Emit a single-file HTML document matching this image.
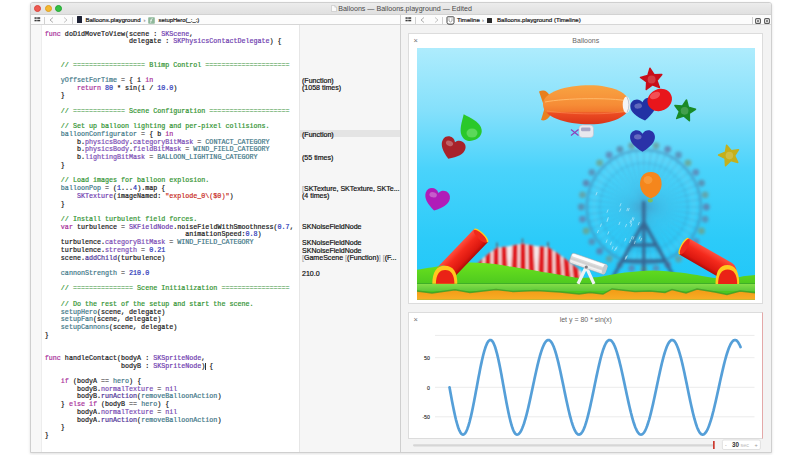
<!DOCTYPE html>
<html><head><meta charset="utf-8">
<style>
*{margin:0;padding:0;box-sizing:border-box}
html,body{width:800px;height:455px;overflow:hidden;background:#fff;font-family:"Liberation Sans",sans-serif}
.abs{position:absolute}
#win{position:absolute;left:30px;top:2px;width:742px;height:451px;background:#fff;border:1px solid #cfcfcf;border-radius:3px 3px 0 0;overflow:hidden;box-shadow:0 1px 3px rgba(0,0,0,.12)}
#title{position:absolute;left:0;top:0;width:740px;height:11px;background:linear-gradient(#ececec,#e0e0e0);}
.tl{position:absolute;top:1.9px;width:7px;height:7px;border-radius:50%}
#jb{position:absolute;left:0;top:11px;width:740px;height:11px;background:#fcfcfc;border-bottom:1px solid #d6d6d6;border-top:0.5px solid #d2d2d2}
.jt{position:absolute;top:-0.1px;font-size:6.1px;line-height:10px;color:#1a1a1a;-webkit-text-stroke:0.2px currentColor;white-space:nowrap}
#gutter{position:absolute;left:0;top:22px;width:11px;height:429px;background:#f8f8f8;border-right:1px solid #ededed}
#code{position:absolute;left:13.8px;top:27.7px;-webkit-text-stroke:0.2px currentColor;font-family:"Liberation Mono",monospace;font-size:6.7px;line-height:7.72px;white-space:pre;color:#1a1a1a}
#side{position:absolute;left:268.2px;top:22px;width:101.2px;height:429px;background:#f6f6f6;border-left:1px solid #e6e6e6}
#res{position:absolute;left:271px;top:27.4px;font-size:7.05px;-webkit-text-stroke:0.2px currentColor;line-height:7.72px;white-space:pre;color:#111}
#divv{position:absolute;left:369.4px;top:12px;width:1px;height:438px;background:#cfcfcf}
#right{position:absolute;left:370.4px;top:22px;width:369.6px;height:429px;background:#f3f3f3}
.card{position:absolute;background:#fff;border:1px solid #dedede}
.k{color:#a8309a}.t{color:#7040b0}.n{color:#2a36b8}.c{color:#329432}.p{color:#427888}.s{color:#c82a1e}.pr{color:#7a4cb4}.pd{color:#4e3296}
</style></head><body>
<div id="win">
  <div id="title">
    <div class="tl" style="left:3.1px;background:#ee5a52;border:0.5px solid #d8453d"></div>
    <div class="tl" style="left:13.5px;background:#f5b830;border:0.5px solid #dc9e22"></div>
    <div class="tl" style="left:23.8px;background:#35c045;border:0.5px solid #22a432"></div>
    <svg class="abs" style="left:299.5px;top:2.2px" width="6" height="7" viewBox="0 0 6 7"><path d="M0.5 0.5 H3.8 L5.5 2.2 V6.5 H0.5 Z" fill="#fafafa" stroke="#b8b8b8" stroke-width="0.5"/><path d="M3.8 0.5 V2.2 H5.5" fill="none" stroke="#b8b8b8" stroke-width="0.5"/></svg>
    <div class="abs" style="left:307.2px;top:0;font-size:7.1px;line-height:13px;color:#4a4a4a;white-space:nowrap">Balloons — Balloons.playground — Edited</div>
  </div>
  <div id="jb">
 <svg class="abs" style="left:2.8px;top:1.8px" width="7" height="5" viewBox="0 0 7 5"><rect x="0.5" y="0.3" width="2.2" height="1.5" fill="#3a3a3a"/><rect x="3.2" y="0.3" width="3" height="1.5" fill="#3a3a3a"/><rect x="0.5" y="2.8" width="2.2" height="1.5" fill="#3a3a3a"/><rect x="3.2" y="2.8" width="3" height="1.5" fill="#3a3a3a"/></svg>
 <div class="abs" style="left:12.6px;top:2px;width:0.8px;height:7px;background:#d0d0d0"></div>
 <svg class="abs" style="left:17.8px;top:2.2px" width="5" height="6" viewBox="0 0 5 6"><path d="M4 0.5 L1 3 L4 5.5" stroke="#9a9a9a" stroke-width="0.8" fill="none"/></svg>
 <svg class="abs" style="left:32px;top:2.2px" width="5" height="6" viewBox="0 0 5 6"><path d="M1 0.5 L4 3 L1 5.5" stroke="#b8b8b8" stroke-width="0.8" fill="none"/></svg>
 <div class="abs" style="left:40.8px;top:2px;width:0.8px;height:7px;background:#d0d0d0"></div>
 <div class="abs" style="left:45.6px;top:1.4px;width:5.6px;height:6.8px;background:#1e2235;border-radius:0.5px"></div>
 <div class="jt" style="left:54.4px">Balloons.playground</div>
 <div class="jt" style="left:112.5px;color:#999">›</div>
 <svg class="abs" style="left:117.4px;top:1.6px" width="7" height="7" viewBox="0 0 7 7"><rect x="0.2" y="0.2" width="6.6" height="6.6" rx="0.8" fill="#8fb89a"/><path d="M4.6 1.6 Q3.4 1.4 3.2 2.8 L2.6 5.8 M2.2 3.3 H4" stroke="#fff" stroke-width="0.7" fill="none"/></svg>
 <div class="jt" style="left:127.6px;font-size:5.85px">setupHero(_:_:)</div>
 <svg class="abs" style="left:373.5px;top:1.8px" width="7" height="5" viewBox="0 0 7 5"><rect x="0.5" y="0.3" width="2.2" height="1.5" fill="#3a3a3a"/><rect x="3.2" y="0.3" width="3" height="1.5" fill="#3a3a3a"/><rect x="0.5" y="2.8" width="2.2" height="1.5" fill="#3a3a3a"/><rect x="3.2" y="2.8" width="3" height="1.5" fill="#3a3a3a"/></svg>
 <div class="abs" style="left:384.2px;top:2px;width:0.8px;height:7px;background:#d0d0d0"></div>
 <svg class="abs" style="left:388.6px;top:2.2px" width="5" height="6" viewBox="0 0 5 6"><path d="M4 0.5 L1 3 L4 5.5" stroke="#9a9a9a" stroke-width="0.8" fill="none"/></svg>
 <svg class="abs" style="left:402.8px;top:2.2px" width="5" height="6" viewBox="0 0 5 6"><path d="M1 0.5 L4 3 L1 5.5" stroke="#b8b8b8" stroke-width="0.8" fill="none"/></svg>
 <div class="abs" style="left:410.8px;top:2px;width:0.8px;height:7px;background:#d0d0d0"></div>
 <svg class="abs" style="left:414.8px;top:1px" width="9" height="9" viewBox="0 0 9 9"><path d="M1 1.5 Q1 0.8 1.8 0.8 H7.2 Q8 0.8 8 1.5 V6.5 Q8 8.2 6 8.2 H3 Q1 8.2 1 6.5 Z" fill="#fff" stroke="#444" stroke-width="1"/><path d="M3 2.2 V5 L4.5 6 L6 5 V2.2" fill="none" stroke="#777" stroke-width="0.6"/></svg>
 <div class="jt" style="left:426px">Timeline</div>
 <div class="jt" style="left:451px;color:#999">›</div>
 <div class="abs" style="left:455.9px;top:2.6px;width:5px;height:5.5px;background:#2a2a2a;border-radius:0.5px"></div>
 <div class="jt" style="left:466px">Balloons.playground (Timeline)</div>
 <div class="abs" style="left:720.6px;top:2px;width:0.8px;height:7px;background:#d0d0d0"></div>
 <svg class="abs" style="left:723.6px;top:2.6px" width="6" height="6" viewBox="0 0 6 6"><rect x="0.6" y="0.6" width="4.8" height="4.8" rx="1" fill="none" stroke="#5a5a5a" stroke-width="1.1"/><rect x="2.1" y="2.1" width="1.8" height="1.8" fill="#6a6a6a"/></svg>
 <svg class="abs" style="left:732.8px;top:2.6px" width="6" height="6" viewBox="0 0 6 6"><rect x="0.6" y="0.6" width="4.8" height="4.8" rx="1" fill="none" stroke="#5a5a5a" stroke-width="1.1"/><rect x="2.1" y="2.1" width="1.8" height="1.8" fill="#6a6a6a"/></svg>
</div>
  <div id="gutter"></div>
  <div id="side"></div>
  <div class="abs" style="left:269.2px;top:126.8px;width:100.2px;height:7.4px;background:#e4e4e4"></div>
  <div id="code"><span class="k">func</span> doDidMoveToView(scene : <span class="t">SKScene</span>,
                     delegate : <span class="t">SKPhysicsContactDelegate</span>) {


<span class="c">    // ================== Blimp Control =====================</span>

<span class="p">    yOffsetForTime</span> = { i <span class="k">in</span>
        <span class="k">return</span> <span class="n">80</span> * sin(i / <span class="n">10.0</span>)
    }

<span class="c">    // ============= Scene Configuration ====================</span>

<span class="c">    // Set up balloon lighting and per-pixel collisions.</span>
<span class="p">    balloonConfigurator</span> = { b <span class="k">in</span>
        b.<span class="pr">physicsBody</span>.<span class="pr">categoryBitMask</span> = <span class="p">CONTACT_CATEGORY</span>
        b.<span class="pr">physicsBody</span>.<span class="pr">fieldBitMask</span> = <span class="p">WIND_FIELD_CATEGORY</span>
        b.<span class="pr">lightingBitMask</span> = <span class="p">BALLOON_LIGHTING_CATEGORY</span>
    }

<span class="c">    // Load images for balloon explosion.</span>
<span class="p">    balloonPop</span> = (<span class="n">1</span>...<span class="n">4</span>).map {
        <span class="t">SKTexture</span>(imageNamed: <span class="s">"explode_0\($0)"</span>)
    }

<span class="c">    // Install turbulent field forces.</span>
    <span class="k">var</span> turbulence = <span class="t">SKFieldNode</span>.noiseFieldWithSmoothness(<span class="n">0.7</span>,
                                   animationSpeed:<span class="n">0.8</span>)
    turbulence.<span class="pr">categoryBitMask</span> = <span class="p">WIND_FIELD_CATEGORY</span>
    turbulence.<span class="pr">strength</span> = <span class="n">0.21</span>
    scene.<span class="pd">addChild</span>(turbulence)

<span class="p">    cannonStrength</span> = <span class="n">210.0</span>

<span class="c">    // =============== Scene Initialization =================</span>

<span class="c">    // Do the rest of the setup and start the scene.</span>
<span class="p">    setupHero</span>(scene, delegate)
<span class="p">    setupFan</span>(scene, delegate)
<span class="p">    setupCannons</span>(scene, delegate)
}


<span class="k">func</span> handleContact(bodyA : <span class="t">SKSpriteNode</span>,
                   bodyB : <span class="t">SKSpriteNode</span>) {

    <span class="k">if</span> (bodyA == <span class="p">hero</span>) {
        bodyB.<span class="pr">normalTexture</span> = <span class="pr">nil</span>
        bodyB.<span class="pd">runAction</span>(<span class="p">removeBalloonAction</span>)
    } <span class="k">else if</span> (bodyB == <span class="p">hero</span>) {
        bodyA.<span class="pr">normalTexture</span> = <span class="pr">nil</span>
        bodyA.<span class="pd">runAction</span>(<span class="p">removeBalloonAction</span>)
    }
}</div>
  <div id="res">





(Function)
(1058 times)





(Function)


(55 times)



<span style="color:#aaa">[</span>SKTexture, SKTexture, SKTe...
(4 times)



SKNoiseFieldNode

SKNoiseFieldNode
SKNoiseFieldNode
<span style="color:#aaa">[</span>GameScene <span style="color:#aaa">[</span>(Function)<span style="color:#aaa">]</span> <span style="color:#aaa">[</span>(F...

210.0</div>
  <div class="abs" style="left:173.8px;top:359.5px;width:0.7px;height:7.5px;background:#333"></div>
  <div id="divv"></div>
  <div id="right"></div>
<div id="rp" class="abs" style="left:-31px;top:-3px;width:800px;height:455px;pointer-events:none">
<div class="abs" style="left:408.1px;top:32.6px;width:354.9px;height:271.4px;background:#fff;border:1px solid #dcdcdc"></div>
<div class="abs" style="left:413.6px;top:35.5px;font-size:7.5px;line-height:10px;color:#707070">×</div>
<div class="abs" style="left:408.6px;top:36px;width:354.4px;text-align:center;font-size:7px;line-height:10px;color:#666">Balloons</div>
<div class="abs" style="left:408.1px;top:312px;width:354.9px;height:126.6px;background:#fff;border:1px solid #dcdcdc;border-right:1.5px solid #e4a8a8"></div>
<div class="abs" style="left:413.6px;top:314.8px;font-size:7.5px;line-height:10px;color:#707070">×</div>
<div class="abs" style="left:408.6px;top:315px;width:354.4px;text-align:center;font-size:7px;line-height:10px;color:#666">let y = 80 * sin(x)</div>
<svg class="abs" style="left:0;top:0" width="800" height="455" viewBox="0 0 800 455">
<defs>
<linearGradient id="sky" x1="0" y1="48" x2="0" y2="300" gradientUnits="userSpaceOnUse"><stop offset="0" stop-color="#aeecfd"/><stop offset="0.25" stop-color="#84e0fb"/><stop offset="0.48" stop-color="#4ad3fb"/><stop offset="0.76" stop-color="#2ccbf9"/><stop offset="1" stop-color="#1ec6f8"/></linearGradient>
<linearGradient id="hill" x1="0" y1="258" x2="0" y2="285" gradientUnits="userSpaceOnUse"><stop offset="0" stop-color="#72e81c"/><stop offset="1" stop-color="#4cc820"/></linearGradient>
<linearGradient id="band" x1="0" y1="283" x2="0" y2="291" gradientUnits="userSpaceOnUse"><stop offset="0" stop-color="#8ae04a"/><stop offset="1" stop-color="#5cc83a"/></linearGradient>
<linearGradient id="orange" x1="0" y1="289" x2="0" y2="300" gradientUnits="userSpaceOnUse"><stop offset="0" stop-color="#f29a14"/><stop offset="1" stop-color="#f8ae26"/></linearGradient>
<linearGradient id="barrelL" x1="0" y1="0" x2="1" y2="0"><stop offset="0" stop-color="#c81010"/><stop offset="0.45" stop-color="#f02a1e"/><stop offset="1" stop-color="#ff6a50"/></linearGradient>
<linearGradient id="barrelR" x1="0" y1="0" x2="0" y2="1"><stop offset="0" stop-color="#ff5a40"/><stop offset="0.5" stop-color="#ee2418"/><stop offset="1" stop-color="#c01010"/></linearGradient>
<linearGradient id="blimpg" x1="0" y1="85" x2="0" y2="125" gradientUnits="userSpaceOnUse"><stop offset="0" stop-color="#f8a442"/><stop offset="0.5" stop-color="#f68c36"/><stop offset="0.66" stop-color="#f27a2e"/><stop offset="0.71" stop-color="#ec4c22"/><stop offset="1" stop-color="#d83218"/></linearGradient>
<linearGradient id="drum" x1="0" y1="0" x2="0" y2="1"><stop offset="0" stop-color="#fafafa"/><stop offset="0.55" stop-color="#cfcfcf"/><stop offset="1" stop-color="#eeeeee"/></linearGradient>
<radialGradient id="shine" cx="0.4" cy="0.35" r="0.6"><stop offset="0" stop-color="#fff" stop-opacity="0.55"/><stop offset="1" stop-color="#fff" stop-opacity="0"/></radialGradient>
<filter id="blur1" x="-20%" y="-20%" width="140%" height="140%"><feGaussianBlur stdDeviation="1.1"/></filter>
<filter id="blurW" x="-20%" y="-20%" width="140%" height="140%"><feGaussianBlur stdDeviation="1.5"/></filter>
<filter id="blur2" x="-20%" y="-20%" width="140%" height="140%"><feGaussianBlur stdDeviation="1.6"/></filter>
<filter id="blur08" x="-20%" y="-20%" width="140%" height="140%"><feGaussianBlur stdDeviation="0.8"/></filter>
<filter id="blur05" x="-20%" y="-20%" width="140%" height="140%"><feGaussianBlur stdDeviation="0.45"/></filter>
<clipPath id="gclip"><rect x="417" y="48" width="338" height="251.7"/></clipPath>
</defs>
<g clip-path="url(#gclip)">
<rect x="417" y="48" width="338" height="252" fill="url(#sky)"/>
<g filter="url(#blurW)"><circle cx="643.8" cy="207" r="57" fill="none" stroke="#4a84b0" stroke-width="2" opacity="0.7"/><circle cx="643.8" cy="207" r="44" fill="none" stroke="#4a84b0" stroke-width="1" opacity="0.4"/><circle cx="643.8" cy="207" r="50" fill="none" stroke="#9ad6ee" stroke-width="5" opacity="0.12"/><path d="M643.8 207.0L643.8 150.0M643.8 207.0L651.2 150.5M643.8 207.0L658.6 151.9M643.8 207.0L665.6 154.3M643.8 207.0L672.3 157.6M643.8 207.0L678.5 161.8M643.8 207.0L684.1 166.7M643.8 207.0L689.0 172.3M643.8 207.0L693.2 178.5M643.8 207.0L696.5 185.2M643.8 207.0L698.9 192.2M643.8 207.0L700.3 199.6M643.8 207.0L700.8 207.0M643.8 207.0L700.3 214.4M643.8 207.0L698.9 221.8M643.8 207.0L696.5 228.8M643.8 207.0L693.2 235.5M643.8 207.0L689.0 241.7M643.8 207.0L684.1 247.3M643.8 207.0L678.5 252.2M643.8 207.0L672.3 256.4M643.8 207.0L665.6 259.7M643.8 207.0L658.6 262.1M643.8 207.0L651.2 263.5M643.8 207.0L643.8 264.0M643.8 207.0L636.4 263.5M643.8 207.0L629.0 262.1M643.8 207.0L622.0 259.7M643.8 207.0L615.3 256.4M643.8 207.0L609.1 252.2M643.8 207.0L603.5 247.3M643.8 207.0L598.6 241.7M643.8 207.0L594.4 235.5M643.8 207.0L591.1 228.8M643.8 207.0L588.7 221.8M643.8 207.0L587.3 214.4M643.8 207.0L586.8 207.0M643.8 207.0L587.3 199.6M643.8 207.0L588.7 192.2M643.8 207.0L591.1 185.2M643.8 207.0L594.4 178.5M643.8 207.0L598.6 172.3M643.8 207.0L603.5 166.7M643.8 207.0L609.1 161.8M643.8 207.0L615.3 157.6M643.8 207.0L622.0 154.3M643.8 207.0L629.0 151.9M643.8 207.0L636.4 150.5" stroke="#4a88b4" stroke-width="0.8" opacity="0.6"/><circle cx="643.8" cy="144.5" r="3.4" fill="#5a84a8" opacity="0.8"/><circle cx="656.0" cy="145.7" r="3.4" fill="#6a9a98" opacity="0.8"/><circle cx="667.7" cy="149.3" r="3.4" fill="#6078a8" opacity="0.8"/><circle cx="678.5" cy="155.0" r="3.4" fill="#5a88b0" opacity="0.8"/><circle cx="688.0" cy="162.8" r="3.4" fill="#70a088" opacity="0.8"/><circle cx="695.8" cy="172.3" r="3.4" fill="#6080b0" opacity="0.8"/><circle cx="701.5" cy="183.1" r="3.4" fill="#5a84a8" opacity="0.8"/><circle cx="705.1" cy="194.8" r="3.4" fill="#6a9a98" opacity="0.8"/><circle cx="706.3" cy="207.0" r="3.4" fill="#6078a8" opacity="0.8"/><circle cx="705.1" cy="219.2" r="3.4" fill="#5a88b0" opacity="0.8"/><circle cx="701.5" cy="230.9" r="3.4" fill="#70a088" opacity="0.8"/><circle cx="695.8" cy="241.7" r="3.4" fill="#6080b0" opacity="0.8"/><circle cx="688.0" cy="251.2" r="3.4" fill="#5a84a8" opacity="0.8"/><circle cx="678.5" cy="259.0" r="3.4" fill="#6a9a98" opacity="0.8"/><circle cx="667.7" cy="264.7" r="3.4" fill="#6078a8" opacity="0.8"/><circle cx="656.0" cy="268.3" r="3.4" fill="#5a88b0" opacity="0.8"/><circle cx="643.8" cy="269.5" r="3.4" fill="#70a088" opacity="0.8"/><circle cx="631.6" cy="268.3" r="3.4" fill="#6080b0" opacity="0.8"/><circle cx="619.9" cy="264.7" r="3.4" fill="#5a84a8" opacity="0.8"/><circle cx="609.1" cy="259.0" r="3.4" fill="#6a9a98" opacity="0.8"/><circle cx="599.6" cy="251.2" r="3.4" fill="#6078a8" opacity="0.8"/><circle cx="591.8" cy="241.7" r="3.4" fill="#5a88b0" opacity="0.8"/><circle cx="586.1" cy="230.9" r="3.4" fill="#70a088" opacity="0.8"/><circle cx="582.5" cy="219.2" r="3.4" fill="#6080b0" opacity="0.8"/><circle cx="581.3" cy="207.0" r="3.4" fill="#5a84a8" opacity="0.8"/><circle cx="582.5" cy="194.8" r="3.4" fill="#6a9a98" opacity="0.8"/><circle cx="586.1" cy="183.1" r="3.4" fill="#6078a8" opacity="0.8"/><circle cx="591.8" cy="172.3" r="3.4" fill="#5a88b0" opacity="0.8"/><circle cx="599.6" cy="162.8" r="3.4" fill="#70a088" opacity="0.8"/><circle cx="609.1" cy="155.0" r="3.4" fill="#6080b0" opacity="0.8"/><circle cx="619.9" cy="149.3" r="3.4" fill="#5a84a8" opacity="0.8"/><circle cx="631.6" cy="145.7" r="3.4" fill="#6a9a98" opacity="0.8"/><path d="M643.8 222 L613 277 M643.8 222 L674 277 M643.8 201 L643.8 277 M622 261 L666 261 M631 245 L657 245" stroke="#36628e" stroke-width="3.4" fill="none" opacity="0.95"/></g>
<path d="M606.9 212.7l1.2 -3.2M606.9 221.9l1.2 -3.2M631.9 220.1l1.2 -3.2M595.9 195.3l1.2 -3.2M619.6 211.7l1.2 -3.2M640.6 241.1l1.2 -3.2M631.2 239.2l1.2 -3.2M629.9 223.0l1.2 -3.2M610.3 244.9l1.2 -3.2M607.7 234.5l1.2 -3.2M633.0 220.9l1.2 -3.2M624.7 241.3l1.2 -3.2M628.1 211.2l1.2 -3.2M632.9 239.6l1.2 -3.2M615.9 249.7l1.2 -3.2M614.6 251.0l1.2 -3.2M600.3 226.8l1.2 -3.2M597.3 233.2l1.2 -3.2M638.2 225.2l1.2 -3.2M619.9 206.4l1.2 -3.2M639.0 239.5l1.2 -3.2M625.4 227.2l1.2 -3.2M618.8 225.0l1.2 -3.2M607.2 220.4l1.2 -3.2M606.0 242.8l1.2 -3.2M612.0 249.5l1.2 -3.2M625.4 259.5l1.2 -3.2M630.5 224.1l1.2 -3.2M626.1 258.6l1.2 -3.2M634.2 244.1l1.2 -3.2M630.7 226.7l1.2 -3.2M629.5 242.8l1.2 -3.2M626.7 211.1l1.2 -3.2M625.1 259.4l1.2 -3.2" stroke="#f0faff" stroke-width="0.9" opacity="0.55" filter="url(#blur05)"/>
<g filter="url(#blur08)"><path d="M475 266 Q484 256 497 247.5 Q510 246.5 522.5 243.5 Q535 246.5 548 247 Q563 256 582 272 L582 284 L475 284 Z" fill="#f6e6e8"/><clipPath id="tclip"><path d="M475 266 Q484 256 497 247.5 Q510 246.5 522.5 243.5 Q535 246.5 548 247 Q563 256 582 272 L582 284 L475 284 Z"/></clipPath><path d="M478.2 244.5 L474.6 284 L481.4 284 L483.5 244.5 ZM485.9 244.5 L483.6 284 L490.4 284 L491.1 244.5 ZM493.5 244.5 L492.6 284 L499.4 284 L498.8 244.5 ZM501.2 244.5 L501.6 284 L508.4 284 L506.4 244.5 ZM512.7 240.5 L510.6 284 L517.4 284 L517.9 240.5 ZM520.3 240.5 L519.6 284 L526.4 284 L525.5 240.5 ZM528.0 240.5 L528.6 284 L535.4 284 L533.2 240.5 ZM539.4 244 L537.6 284 L544.4 284 L544.6 244 ZM547.1 244 L546.6 284 L553.4 284 L552.3 244 ZM554.8 244 L555.6 284 L562.4 284 L560.0 244 ZM562.4 244 L564.6 284 L571.4 284 L567.6 244 ZM570.0 244 L573.6 284 L580.4 284 L575.2 244 Z" fill="#e01e24" clip-path="url(#tclip)"/><path d="M497 247.5 V242.5 M522.5 243.5 V238.5 M548 247 V242" stroke="#5a6a7a" stroke-width="1.6"/></g>
<path d="M417 269.8 C420.3 269.3 430.7 267.7 437 266.6 C443.3 265.6 449.2 264.2 455 263.5 C460.8 262.8 465.8 262.4 472 262.5 C478.2 262.6 485.7 263.1 492 263.8 C498.3 264.5 504.5 265.7 510 266.5 C515.5 267.3 520.0 268.0 525 268.8 C530.0 269.6 534.7 270.6 540 271.5 C545.3 272.4 551.2 273.3 557 274.3 C562.8 275.3 569.5 276.9 575 277.5 C580.5 278.1 585.5 277.8 590 277.6 C594.5 277.4 596.2 277.3 602 276.5 C607.8 275.7 616.5 273.6 625 272.6 C633.5 271.6 643.8 270.4 653 270.4 C662.2 270.4 671.8 271.7 680 272.6 C688.2 273.5 695.7 275.0 702 276 C708.3 277.0 713.7 278.0 718 278.5 C722.3 279.0 723.5 279.4 728 279 C732.5 278.6 740.2 276.7 745 276 C749.8 275.3 755.0 275.0 757 274.8 L757 300 L417 300 Z" fill="url(#hill)"/>
<rect x="417" y="283.2" width="338" height="0.9" fill="#3ca82a"/>
<rect x="417" y="284" width="338" height="7" fill="url(#band)"/>
<path d="M417 291 L432 293 L455 289.7 L470 292.5 L496 289.5 L513 291.5 L536 290.5 L560 292 L579 294 L590 292.5 L603 294 L612 289 L635 291.5 L650 291 L665 292.5 L672 289.5 L686 293 L697 289 L715 292 L727 294.5 L740 291 L757 293 L757 300 L417 300Z" fill="url(#orange)"/>
<path d="M417 291 L432 293 L455 289.7 L470 292.5 L496 289.5 L513 291.5 L536 290.5 L560 292 L579 294 L590 292.5 L603 294 L612 289 L635 291.5 L650 291 L665 292.5 L672 289.5 L686 293 L697 289 L715 292 L727 294.5 L740 291 L757 293" stroke="#3a9e28" stroke-width="1.4" fill="none" opacity="0.8"/>
<linearGradient id="cbL" gradientUnits="userSpaceOnUse" x1="474.4" y1="228.8" x2="488.0" y2="242.0"><stop offset="0" stop-color="#ff5040"/><stop offset="0.35" stop-color="#f42a1c"/><stop offset="0.8" stop-color="#dc1810"/><stop offset="1" stop-color="#b00c08"/></linearGradient><path d="M474.4 228.8 L436.7 268.0 A9.5 9.5 0 0 1 450.3 281.2 L488.0 242.0 Z" fill="url(#cbL)"/><ellipse cx="481.2" cy="235.4" rx="2.9" ry="9.5" transform="rotate(133.9 481.2 235.4)" fill="#ffd020"/><ellipse cx="480.3" cy="236.3" rx="2.9" ry="8.8" transform="rotate(133.9 480.3 236.3)" fill="#f02a1c"/>
<path d="M432.3 283.8 Q432.5 265.7 444.8 265.7 Q457.3 265.7 457.3 283.8 Z" fill="#ffc81e"/>
<path d="M435.9 283.8 Q436.2 270 445.1 270 Q454.2 270 454.4 283.8 Z" fill="#ea2216"/>
<linearGradient id="cbR" gradientUnits="userSpaceOnUse" x1="688.3" y1="237.9" x2="678.9" y2="254.3"><stop offset="0" stop-color="#ff5040"/><stop offset="0.35" stop-color="#f42a1c"/><stop offset="0.8" stop-color="#dc1810"/><stop offset="1" stop-color="#b00c08"/></linearGradient><path d="M688.3 237.9 L731.7 262.8 A9.4 9.4 0 0 1 722.3 279.2 L678.9 254.3 Z" fill="url(#cbR)"/><ellipse cx="683.6" cy="246.1" rx="2.8" ry="9.4" transform="rotate(29.8 683.6 246.1)" fill="#ffd020"/><ellipse cx="684.7" cy="246.7" rx="2.8" ry="8.7" transform="rotate(29.8 684.7 246.7)" fill="#f02a1c"/>
<path d="M715.5 284 Q715.7 264.9 727.3 264.9 Q739.2 264.9 739.2 284 Z" fill="#ffc81e"/>
<path d="M718.1 284 Q718.4 269.5 727.6 269.5 Q737 269.5 737.2 284 Z" fill="#ea2216"/>
<path d="M586.2 267 L578 283.8 M586.2 267 L594 283.8" stroke="#f0f2f4" stroke-width="3.2"/>
<g transform="rotate(19 588.5 263.5)"><rect x="569.5" y="258.5" width="38" height="10.5" rx="2.5" fill="url(#drum)" stroke="#a0a4aa" stroke-width="0.5"/><rect x="570.5" y="259.4" width="35" height="2.6" rx="1.2" fill="#ffffff" opacity="0.95"/><rect x="570.5" y="265.8" width="35" height="1.4" fill="#ffffff" opacity="0.6"/><ellipse cx="605.5" cy="263.75" rx="2" ry="5.1" fill="#c4c8ce"/></g>
<circle cx="586.3" cy="267" r="1.6" fill="#7a7a80"/>
<path d="M539 91.5 Q546 88 550 96 L552 104 L544 106 Z" fill="#e8801e"/>
<path d="M541 120 Q547 122 551 114 L552 108 L545 107 Z" fill="#e8801e"/>
<path d="M543 104.5 C543 92 565 85.3 590 85.3 C612 85.3 630 93 630 104.5 C630 116 612 124.3 590 124.3 C565 124.3 543 117 543 104.5 Z" fill="url(#blimpg)"/>
<path d="M545 102 C565 98 610 97.5 628 101" stroke="#ffbe70" stroke-width="0.9" fill="none"/>
<path d="M547 111 C570 114.5 610 115 626 111" stroke="#ff9a60" stroke-width="0.7" fill="none" opacity="0.7"/>
<ellipse cx="626.5" cy="104.8" rx="3.8" ry="8.3" fill="#f4f4f4"/>
<path d="M627 97 Q631 104.8 627 112.6" stroke="#b8c4d0" stroke-width="1" fill="none"/>
<rect x="579" y="125" width="14.5" height="12.5" rx="3.5" fill="#e8e8ee" stroke="#b8b8c8" stroke-width="0.5"/>
<rect x="581" y="127.5" width="9.5" height="3.8" rx="1.2" fill="#a8a8c8"/>
<path d="M571 129.5 L578.5 135.5 M578.5 129.5 L571 135.5" stroke="#9040b8" stroke-width="1.2"/>
<g filter="url(#blur05)">
<g transform="translate(469.6 127.5) rotate(-24)"><path d="M0 -14.5 C5 -8 10.5 -2 10.5 4 C10.5 10.5 5.5 13.5 0 13.5 C-5.5 13.5 -10.5 10.5 -10.5 4 C-10.5 -2 -5 -8 0 -14.5 Z" fill="#2cc82a"/></g>
<ellipse cx="472" cy="133" rx="5.5" ry="4.5" fill="#8ae88a" opacity="0.5"/>
<g transform="translate(452.3 148.8) rotate(22)"><path d="M0 10.672 C-8.12 5.8 -12.76 0.58 -12.18 -4.64 C-11.6 -11.02 -3.48 -12.76 0 -7.192 C3.48 -12.76 11.6 -11.02 12.18 -4.64 C12.76 0.58 8.12 5.8 0 10.672 Z" fill="#a8242c"/><ellipse cx="-4.64" cy="-4.06" rx="3.7119999999999997" ry="2.552" fill="#fff" opacity="0.28"/></g>
<g transform="translate(436.7 200) rotate(14)"><path d="M0 10.856000000000002 C-8.26 5.9 -12.980000000000002 0.5900000000000001 -12.39 -4.720000000000001 C-11.8 -11.21 -3.54 -12.980000000000002 0 -7.316000000000001 C3.54 -12.980000000000002 11.8 -11.21 12.39 -4.720000000000001 C12.980000000000002 0.5900000000000001 8.26 5.9 0 10.856000000000002 Z" fill="#b01cb8"/><ellipse cx="-4.720000000000001" cy="-4.13" rx="3.7760000000000002" ry="2.596" fill="#fff" opacity="0.28"/></g>
<g transform="translate(643.5 109.5) rotate(-8)"><path d="M0 11.040000000000001 C-8.399999999999999 6.0 -13.200000000000001 0.6000000000000001 -12.600000000000001 -4.800000000000001 C-12.0 -11.399999999999999 -3.5999999999999996 -13.200000000000001 0 -7.4399999999999995 C3.5999999999999996 -13.200000000000001 12.0 -11.399999999999999 12.600000000000001 -4.800000000000001 C13.200000000000001 0.6000000000000001 8.399999999999999 6.0 0 11.040000000000001 Z" fill="#2330a4"/><ellipse cx="-4.800000000000001" cy="-4.199999999999999" rx="3.84" ry="2.64" fill="#fff" opacity="0.28"/></g>
<g transform="translate(642.5 141) rotate(0)"><path d="M0 10.856000000000002 C-8.26 5.9 -12.980000000000002 0.5900000000000001 -12.39 -4.720000000000001 C-11.8 -11.21 -3.54 -12.980000000000002 0 -7.316000000000001 C3.54 -12.980000000000002 11.8 -11.21 12.39 -4.720000000000001 C12.980000000000002 0.5900000000000001 8.26 5.9 0 10.856000000000002 Z" fill="#2a30a8"/><ellipse cx="-4.720000000000001" cy="-4.13" rx="3.7760000000000002" ry="2.596" fill="#fff" opacity="0.28"/></g>
<ellipse cx="659.7" cy="100" rx="12.5" ry="10.8" fill="#e8141c" transform="rotate(-25 659.7 100)"/>
<ellipse cx="655" cy="95.5" rx="5.5" ry="3.2" fill="#ff9a9a" opacity="0.45" transform="rotate(-25 655 95.5)"/>
<path d="M650.8 172 C658.5 172 661.6 178 661.6 184 C661.6 191 656.5 196.5 650.8 198.5 C645 196.5 640 191 640 184 C640 178 643.2 172 650.8 172 Z" fill="#f5861a"/>
<ellipse cx="648" cy="180" rx="4.5" ry="4" fill="#ffc070" opacity="0.35"/>
<ellipse cx="650.3" cy="200.5" rx="2.6" ry="2" fill="#8ac040" opacity="0.8"/>
<polygon points="650.0,68.3 654.1,74.7 661.8,74.5 656.9,80.4 659.4,87.6 652.4,84.9 646.3,89.5 646.7,81.9 640.5,77.5 647.8,75.6" fill="#c8101a" stroke-linejoin="round" stroke="#c8101a" stroke-width="1.5"/><circle cx="651.6" cy="79.5" r="3.955" fill="#fff" opacity="0.18"/>
<polygon points="686.5,100.0 688.4,107.1 695.5,109.3 689.3,113.3 689.4,120.7 683.7,116.0 676.7,118.4 679.4,111.5 674.9,105.6 682.3,106.1" fill="#1a8a28" stroke-linejoin="round" stroke="#1a8a28" stroke-width="1.5"/><circle cx="684.6" cy="110.8" r="3.8499999999999996" fill="#fff" opacity="0.18"/>
<polygon points="726.6,145.2 731.3,150.8 738.5,149.7 734.6,155.9 737.8,162.4 730.7,160.6 725.5,165.7 725.1,158.4 718.6,155.0 725.4,152.3" fill="#c4b01c" stroke-linejoin="round" stroke="#c4b01c" stroke-width="1.5"/><circle cx="729.4" cy="155.6" r="3.78" fill="#fff" opacity="0.18"/>
</g>
</g>
<path d="M435 335.4H754.5M435 357.7H754.5M435 387.3H754.5M435 416.8H754.5" stroke="#e6e6e6" stroke-width="0.8"/>
<path d="M449.5 387.3L450.0 390.1L450.5 392.8L451.0 395.5L451.5 398.2L452.0 400.9L452.5 403.5L453.0 406.0L453.5 408.5L454.0 410.9L454.5 413.3L455.0 415.5L455.5 417.7L456.0 419.8L456.5 421.7L457.0 423.5L457.5 425.2L458.0 426.8L458.5 428.3L459.0 429.6L459.5 430.7L460.0 431.7L460.5 432.6L461.0 433.3L461.5 433.9L462.0 434.3L462.5 434.5L463.0 434.6L463.5 434.5L464.0 434.3L464.5 433.9L465.0 433.4L465.5 432.7L466.0 431.8L466.5 430.8L467.0 429.7L467.5 428.4L468.0 427.0L468.5 425.5L469.0 423.8L469.5 422.1L470.0 420.2L470.5 418.2L471.0 416.1L471.5 413.9L472.0 411.6L472.5 409.2L473.0 406.8L473.5 404.3L474.0 401.7L474.5 399.1L475.0 396.5L475.5 393.8L476.0 391.1L476.5 388.4L477.0 385.7L477.5 383.0L478.0 380.3L478.5 377.6L479.0 375.0L479.5 372.4L480.0 369.8L480.5 367.3L481.0 364.9L481.5 362.6L482.0 360.3L482.5 358.1L483.0 356.0L483.5 354.0L484.0 352.2L484.5 350.4L485.0 348.8L485.5 347.3L486.0 345.9L486.5 344.7L487.0 343.5L487.5 342.6L488.0 341.8L488.5 341.1L489.0 340.6L489.5 340.3L490.0 340.0L490.5 340.0L491.0 340.1L491.5 340.4L492.0 340.8L492.5 341.4L493.0 342.2L493.5 343.1L494.0 344.2L494.5 345.4L495.0 346.8L495.5 348.3L496.0 350.0L496.5 351.8L497.0 353.7L497.5 355.7L498.0 357.8L498.5 360.0L499.0 362.4L499.5 364.8L500.0 367.3L500.5 369.8L501.0 372.5L501.5 375.1L502.0 377.9L502.5 380.6L503.0 383.4L503.5 386.2L504.0 389.0L504.5 391.8L505.0 394.5L505.5 397.3L506.0 400.0L506.5 402.7L507.0 405.3L507.5 407.8L508.0 410.3L508.5 412.7L509.0 415.0L509.5 417.2L510.0 419.3L510.5 421.3L511.0 423.2L511.5 425.0L512.0 426.6L512.5 428.1L513.0 429.4L513.5 430.6L514.0 431.7L514.5 432.6L515.0 433.3L515.5 433.9L516.0 434.3L516.5 434.5L517.0 434.6L517.5 434.5L518.0 434.4L518.5 434.1L519.0 433.7L519.5 433.1L520.0 432.5L520.5 431.7L521.0 430.9L521.5 429.9L522.0 428.8L522.5 427.6L523.0 426.3L523.5 424.9L524.0 423.5L524.5 421.9L525.0 420.2L525.5 418.5L526.0 416.7L526.5 414.8L527.0 412.8L527.5 410.8L528.0 408.7L528.5 406.6L529.0 404.4L529.5 402.2L530.0 399.9L530.5 397.6L531.0 395.3L531.5 393.0L532.0 390.6L532.5 388.2L533.0 385.9L533.5 383.5L534.0 381.2L534.5 378.8L535.0 376.5L535.5 374.2L536.0 372.0L536.5 369.7L537.0 367.6L537.5 365.4L538.0 363.4L538.5 361.4L539.0 359.4L539.5 357.5L540.0 355.7L540.5 354.0L541.0 352.4L541.5 350.8L542.0 349.4L542.5 348.0L543.0 346.7L543.5 345.6L544.0 344.5L544.5 343.6L545.0 342.7L545.5 342.0L546.0 341.4L546.5 340.9L547.0 340.5L547.5 340.2L548.0 340.0L548.5 340.0L549.0 340.1L549.5 340.3L550.0 340.6L550.5 341.1L551.0 341.7L551.5 342.4L552.0 343.2L552.5 344.1L553.0 345.2L553.5 346.3L554.0 347.6L554.5 349.0L555.0 350.4L555.5 352.0L556.0 353.7L556.5 355.4L557.0 357.3L557.5 359.2L558.0 361.2L558.5 363.2L559.0 365.4L559.5 367.5L560.0 369.8L560.5 372.0L561.0 374.4L561.5 376.7L562.0 379.1L562.5 381.5L563.0 383.9L563.5 386.3L564.0 388.8L564.5 391.2L565.0 393.6L565.5 396.0L566.0 398.4L566.5 400.7L567.0 403.0L567.5 405.3L568.0 407.5L568.5 409.7L569.0 411.8L569.5 413.8L570.0 415.8L570.5 417.7L571.0 419.5L571.5 421.3L572.0 422.9L572.5 424.5L573.0 425.9L573.5 427.3L574.0 428.5L574.5 429.6L575.0 430.7L575.5 431.6L576.0 432.4L576.5 433.1L577.0 433.6L577.5 434.0L578.0 434.4L578.5 434.5L579.0 434.6L579.5 434.5L580.0 434.3L580.5 434.0L581.0 433.6L581.5 433.0L582.0 432.4L582.5 431.6L583.0 430.6L583.5 429.6L584.0 428.5L584.5 427.2L585.0 425.9L585.5 424.4L586.0 422.8L586.5 421.2L587.0 419.4L587.5 417.6L588.0 415.7L588.5 413.7L589.0 411.6L589.5 409.5L590.0 407.4L590.5 405.1L591.0 402.8L591.5 400.5L592.0 398.2L592.5 395.8L593.0 393.4L593.5 391.0L594.0 388.5L594.5 386.1L595.0 383.6L595.5 381.2L596.0 378.8L596.5 376.4L597.0 374.1L597.5 371.8L598.0 369.5L598.5 367.2L599.0 365.1L599.5 363.0L600.0 360.9L600.5 358.9L601.0 357.0L601.5 355.2L602.0 353.4L602.5 351.8L603.0 350.2L603.5 348.7L604.0 347.4L604.5 346.1L605.0 345.0L605.5 344.0L606.0 343.0L606.5 342.2L607.0 341.6L607.5 341.0L608.0 340.6L608.5 340.3L609.0 340.1L609.5 340.0L610.0 340.1L610.5 340.2L611.0 340.5L611.5 340.9L612.0 341.5L612.5 342.1L613.0 342.9L613.5 343.7L614.0 344.7L614.5 345.8L615.0 346.9L615.5 348.2L616.0 349.6L616.5 351.1L617.0 352.6L617.5 354.3L618.0 356.0L618.5 357.8L619.0 359.7L619.5 361.6L620.0 363.7L620.5 365.7L621.0 367.8L621.5 370.0L622.0 372.2L622.5 374.5L623.0 376.8L623.5 379.1L624.0 381.4L624.5 383.8L625.0 386.1L625.5 388.5L626.0 390.8L626.5 393.2L627.0 395.5L627.5 397.8L628.0 400.1L628.5 402.4L629.0 404.6L629.5 406.8L630.0 408.9L630.5 410.9L631.0 413.0L631.5 414.9L632.0 416.8L632.5 418.6L633.0 420.3L633.5 422.0L634.0 423.5L634.5 425.0L635.0 426.4L635.5 427.7L636.0 428.8L636.5 429.9L637.0 430.9L637.5 431.7L638.0 432.5L638.5 433.1L639.0 433.7L639.5 434.1L640.0 434.4L640.5 434.5L641.0 434.6L641.5 434.5L642.0 434.4L642.5 434.1L643.0 433.6L643.5 433.1L644.0 432.5L644.5 431.7L645.0 430.8L645.5 429.8L646.0 428.7L646.5 427.5L647.0 426.2L647.5 424.8L648.0 423.3L648.5 421.7L649.0 420.1L649.5 418.3L650.0 416.5L650.5 414.6L651.0 412.6L651.5 410.5L652.0 408.4L652.5 406.3L653.0 404.1L653.5 401.8L654.0 399.5L654.5 397.2L655.0 394.9L655.5 392.5L656.0 390.2L656.5 387.8L657.0 385.4L657.5 383.0L658.0 380.7L658.5 378.3L659.0 376.0L659.5 373.7L660.0 371.4L660.5 369.2L661.0 367.0L661.5 364.9L662.0 362.8L662.5 360.8L663.0 358.9L663.5 357.0L664.0 355.2L664.5 353.5L665.0 351.9L665.5 350.4L666.0 348.9L666.5 347.6L667.0 346.3L667.5 345.2L668.0 344.2L668.5 343.2L669.0 342.4L669.5 341.7L670.0 341.2L670.5 340.7L671.0 340.3L671.5 340.1L672.0 340.0L672.5 340.0L673.0 340.2L673.5 340.4L674.0 340.8L674.5 341.3L675.0 342.0L675.5 342.7L676.0 343.6L676.5 344.6L677.0 345.7L677.5 346.9L678.0 348.2L678.5 349.7L679.0 351.2L679.5 352.8L680.0 354.6L680.5 356.4L681.0 358.2L681.5 360.2L682.0 362.3L682.5 364.4L683.0 366.5L683.5 368.7L684.0 371.0L684.5 373.3L685.0 375.7L685.5 378.1L686.0 380.5L686.5 382.9L687.0 385.3L687.5 387.8L688.0 390.2L688.5 392.7L689.0 395.1L689.5 397.5L690.0 399.9L690.5 402.2L691.0 404.5L691.5 406.7L692.0 408.9L692.5 411.1L693.0 413.2L693.5 415.2L694.0 417.1L694.5 419.0L695.0 420.7L695.5 422.4L696.0 424.0L696.5 425.5L697.0 426.9L697.5 428.2L698.0 429.4L698.5 430.4L699.0 431.4L699.5 432.2L700.0 432.9L700.5 433.5L701.0 434.0L701.5 434.3L702.0 434.5L702.5 434.6L703.0 434.6L703.5 434.4L704.0 434.2L704.5 433.8L705.0 433.3L705.5 432.7L706.0 432.1L706.5 431.3L707.0 430.4L707.5 429.4L708.0 428.3L708.5 427.1L709.0 425.8L709.5 424.4L710.0 422.9L710.5 421.4L711.0 419.8L711.5 418.1L712.0 416.3L712.5 414.4L713.0 412.5L713.5 410.6L714.0 408.5L714.5 406.5L715.0 404.3L715.5 402.2L716.0 400.0L716.5 397.8L717.0 395.5L717.5 393.2L718.0 391.0L718.5 388.7L719.0 386.4L719.5 384.1L720.0 381.8L720.5 379.5L721.0 377.3L721.5 375.1L722.0 372.9L722.5 370.7L723.0 368.6L723.5 366.5L724.0 364.4L724.5 362.5L725.0 360.5L725.5 358.7L726.0 356.9L726.5 355.2L727.0 353.5L727.5 352.0L728.0 350.5L728.5 349.1L729.0 347.8L729.5 346.6L730.0 345.5L730.5 344.4L731.0 343.5L731.5 342.7L732.0 342.0L732.5 341.4L733.0 340.9L733.5 340.5L734.0 340.2L734.5 340.1L735.0 340.0L735.5 340.1L736.0 340.2L736.5 340.5L737.0 340.9L737.5 341.5L738.0 342.1L738.5 342.9L739.0 343.8L739.5 344.7L740.0 345.8L740.5 347.0" stroke="#559fd8" stroke-width="2.7" fill="none" stroke-linecap="round" stroke-linejoin="round"/>
<rect x="413" y="444.2" width="301" height="2.2" rx="1.1" fill="#d6d6d6"/>
<rect x="713" y="441" width="1.7" height="8" fill="#cc3a30"/>
<rect x="722.4" y="440" width="38" height="9.5" rx="1.5" fill="#fff" stroke="#d0d0d0" stroke-width="0.6"/>
</svg>
<div class="abs" style="left:421.3px;top:353px;width:8.6px;text-align:right;font-size:5.2px;line-height:10px;color:#333;-webkit-text-stroke:0.15px #333">50</div>
<div class="abs" style="left:421.3px;top:382.5px;width:8.6px;text-align:right;font-size:5.2px;line-height:10px;color:#333;-webkit-text-stroke:0.15px #333">0</div>
<div class="abs" style="left:411.3px;top:412px;width:18.6px;text-align:right;font-size:5.2px;line-height:10px;color:#333;-webkit-text-stroke:0.15px #333">-50</div>
<div class="abs" style="left:725px;top:439.8px;font-size:5px;line-height:10px;color:#999">-</div>
<div class="abs" style="left:732px;top:439.8px;font-size:6.3px;line-height:10px;color:#333;font-weight:bold">30</div>
<div class="abs" style="left:740.5px;top:439.8px;font-size:5.5px;line-height:10px;color:#bbb">sec</div>
<div class="abs" style="left:754.5px;top:439.8px;font-size:5.5px;line-height:10px;color:#999">+</div>
</div>
</div>
</body></html>
